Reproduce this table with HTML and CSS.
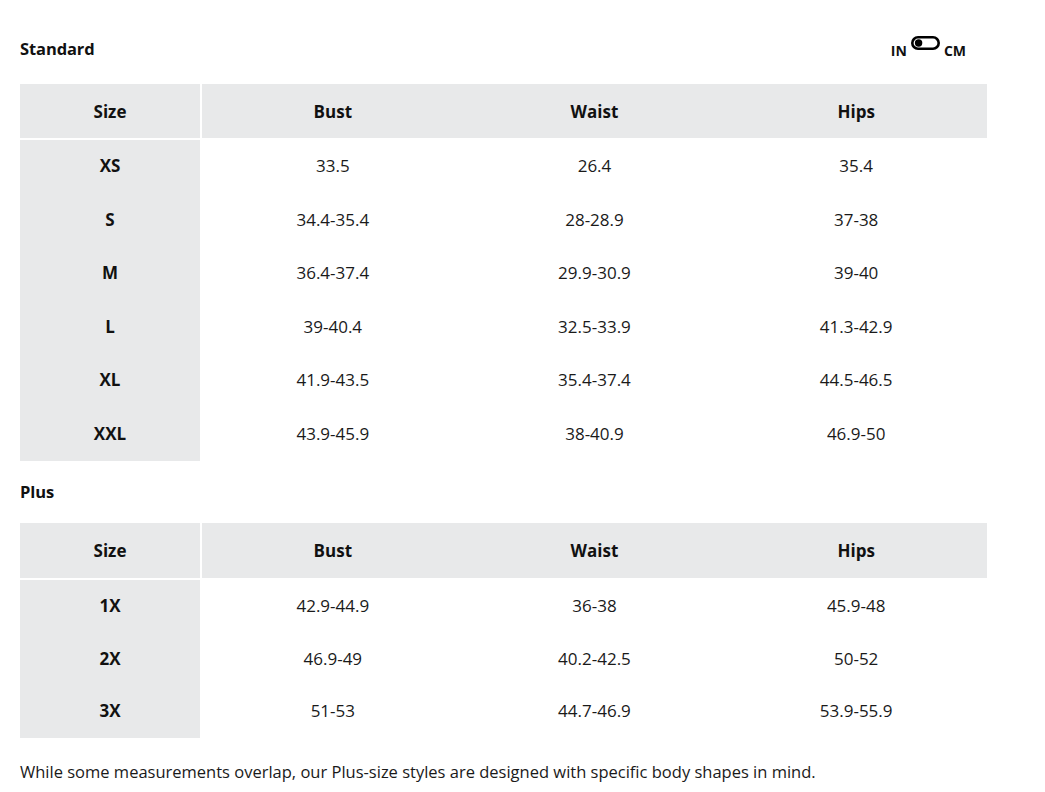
FILE: index.html
```html
<!DOCTYPE html>
<html>
<head>
<meta charset="utf-8">
<link rel="stylesheet" href="styles.css">
</head>
<body>
<div class="page">
  <div class="section-head">
    <h2 class="section-title">Standard</h2>
    <div class="unit-toggle">
      <span class="unit">IN</span>
      <svg class="toggle-icon" width="29" height="14" viewBox="0 0 29 14">
        <rect x="1.3" y="1.3" width="26.4" height="11.4" rx="5.7" fill="none" stroke="#000" stroke-width="2.6"/>
        <circle cx="7.6" cy="7" r="3.7" fill="#000"/>
      </svg>
      <span class="unit">CM</span>
    </div>
  </div>
  <table class="size-table">
    <thead>
      <tr><th class="size-col">Size</th><th>Bust</th><th>Waist</th><th>Hips</th></tr>
    </thead>
    <tbody>
      <tr><th class="size-col">XS</th><td>33.5</td><td>26.4</td><td>35.4</td></tr>
      <tr><th class="size-col">S</th><td>34.4-35.4</td><td>28-28.9</td><td>37-38</td></tr>
      <tr><th class="size-col">M</th><td>36.4-37.4</td><td>29.9-30.9</td><td>39-40</td></tr>
      <tr><th class="size-col">L</th><td>39-40.4</td><td>32.5-33.9</td><td>41.3-42.9</td></tr>
      <tr><th class="size-col">XL</th><td>41.9-43.5</td><td>35.4-37.4</td><td>44.5-46.5</td></tr>
      <tr><th class="size-col">XXL</th><td>43.9-45.9</td><td>38-40.9</td><td>46.9-50</td></tr>
    </tbody>
  </table>
  <div class="section-head plus-head">
    <h2 class="section-title">Plus</h2>
  </div>
  <table class="size-table plus-table">
    <thead>
      <tr><th class="size-col">Size</th><th>Bust</th><th>Waist</th><th>Hips</th></tr>
    </thead>
    <tbody>
      <tr><th class="size-col">1X</th><td>42.9-44.9</td><td>36-38</td><td>45.9-48</td></tr>
      <tr><th class="size-col">2X</th><td>46.9-49</td><td>40.2-42.5</td><td>50-52</td></tr>
      <tr><th class="size-col">3X</th><td>51-53</td><td>44.7-46.9</td><td>53.9-55.9</td></tr>
    </tbody>
  </table>
  <p class="note">While some measurements overlap, our Plus-size styles are designed with specific body shapes in mind.</p>
</div>
</body>
</html>
```
FILE: styles.css
```css
html, body {
  margin: 0;
  padding: 0;
  background: #fff;
}
body {
  font-family: "Open Sans", "Noto Sans", sans-serif;
  color: #111;
}
.page {
  width: 967px;
  padding: 0 0 0 20px;
}
.section-head {
  display: flex;
  align-items: center;
  justify-content: space-between;
  height: 36px;
  padding: 30px 21px 18px 0;
}
.plus-head {
  padding: 12px 0 14px 0;
}
.section-title {
  margin: 0;
  font-size: 16.5px;
  font-weight: 700;
  letter-spacing: -0.1px;
}
.unit-toggle {
  display: flex;
  align-items: center;
  gap: 4px;
  font-size: 14px;
  font-weight: 700;
}
.unit {
  position: relative;
  top: 2px;
}
.toggle-icon {
  display: block;
  margin-top: -11px;
}
.size-table {
  width: 967px;
  border-collapse: separate;
  border-spacing: 0;
  table-layout: fixed;
}
.size-table th,
.size-table td {
  text-align: center;
  padding: 0;
  font-size: 17px;
}
.size-table thead th {
  background: #e8e9ea;
  font-weight: 700;
  height: 54px;
  border-bottom: 2px solid #fff;
}
.plus-table thead th {
  height: 55px;
}
.size-table tbody th,
.size-table tbody td {
  height: 51.5px;
  padding-bottom: 2px;
}
.plus-table tbody th,
.plus-table tbody td {
  height: 50.7px;
}
.size-table td {
  font-weight: 400;
  color: #1a1a1a;
}
.size-table .size-col {
  width: 180px;
  background: #e8e9ea;
  border-right: 2px solid #fff;
  font-weight: 700;
}
.note {
  margin: 0;
  padding: 22px 0 0 0;
  font-size: 16.5px;
  color: #1a1a1a;
}
```
